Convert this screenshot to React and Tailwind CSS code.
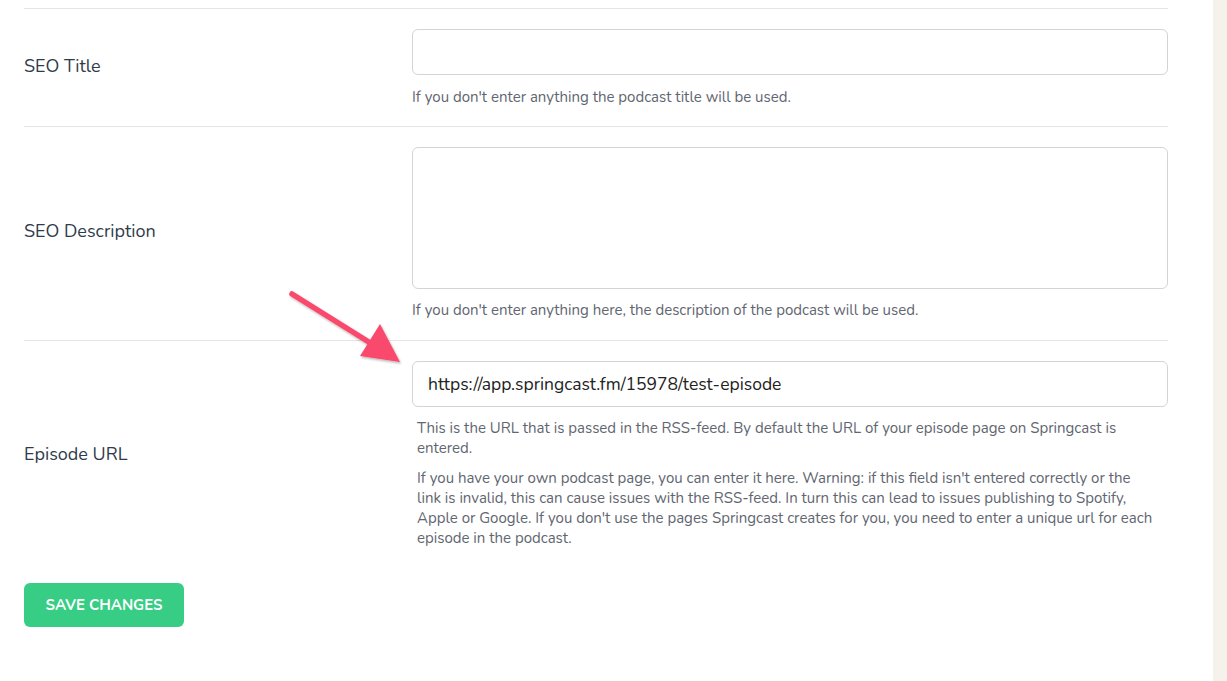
const font = { fontFamily: 'Nunito, Lato, "Noto Sans", sans-serif' };

function Arrow() {
  return (
    <svg
      className="absolute left-[284px] top-[286px] pointer-events-none"
      width="126"
      height="84"
      viewBox="0 0 126 84"
    >
      <defs>
        <filter id="sh" x="-20%" y="-20%" width="140%" height="140%">
          <feDropShadow dx="1" dy="1.5" stdDeviation="1" floodColor="#000" floodOpacity="0.3" />
        </filter>
      </defs>
      <g filter="url(#sh)">
        <line x1="8" y1="8" x2="88" y2="58" stroke="#f9496d" strokeWidth="5.5" strokeLinecap="round" />
        <polygon points="116,76 76,70 96,38" fill="#f9496d" />
      </g>
    </svg>
  );
}

export default function App() {
  return (
    <div className="flex min-h-[681px] bg-white text-[#2d3748]" style={font}>
      <div className="relative flex-1">
        <div className="ml-6 w-[1144px] pt-2">
          {/* SEO title */}
          <div className="grid grid-cols-[388px_1fr] border-t border-[#e5e5e5] pt-5 pb-[19px]">
            <div className="flex items-center pb-1 text-[18px] text-[#2f3b4a]">SEO Title</div>
            <div>
              <input
                className="block h-[46px] w-full rounded-md border border-[#d4d4d8] px-4 text-[17px] outline-none"
                defaultValue=""
              />
              <p className="mt-3 text-[15px] leading-5 text-[#5f6670]">
                If you don't enter anything the podcast title will be used.
              </p>
            </div>
          </div>

          {/* SEO description */}
          <div className="grid grid-cols-[388px_1fr] border-t border-[#e5e5e5] pt-5 pb-5">
            <div className="flex items-center pb-1 text-[18px] text-[#2f3b4a]">SEO Description</div>
            <div>
              <textarea className="block h-[142px] w-full resize-none rounded-md border border-[#d4d4d8] px-4 py-2 outline-none" />
              <p className="mt-[11px] text-[15px] leading-5 text-[#5f6670]">
                If you don't enter anything here, the description of the podcast will be used.
              </p>
            </div>
          </div>

          {/* Episode URL */}
          <div className="grid grid-cols-[388px_1fr] border-t border-[#e5e5e5] pt-5">
            <div className="flex items-center text-[18px] text-[#2f3b4a]">Episode URL</div>
            <div>
              <input
                className="block h-[46px] w-full rounded-md border border-[#d4d4d8] px-[15px] text-[17.5px] text-[#222] outline-none"
                defaultValue="https://app.springcast.fm/15978/test-episode"
              />
              <div className="mt-[11px] pl-[5px] pr-[12px] text-[15px] leading-5 text-[#5f6670]">
                <p>
                  This is the URL that is passed in the RSS-feed. By default the URL of your episode page on
                  Springcast is entered.
                </p>
                <p className="mt-[10px]">
                  If you have your own podcast page, you can enter it here. Warning: if this field isn't entered
                  correctly or the link is invalid, this can cause issues with the RSS-feed. In turn this can lead
                  to issues publishing to Spotify, Apple or Google. If you don't use the pages Springcast creates for
                  you, you need to enter a unique url for each episode in the podcast.
                </p>
              </div>
            </div>
          </div>

          <button className="mt-[35px] h-[44px] w-[160px] rounded-md bg-[#37cd84] text-[15px] font-bold uppercase text-white">
            Save Changes
          </button>
        </div>
        <Arrow />
      </div>
      <div className="w-[14px] bg-[#f5f2ec]" />
    </div>
  );
}
